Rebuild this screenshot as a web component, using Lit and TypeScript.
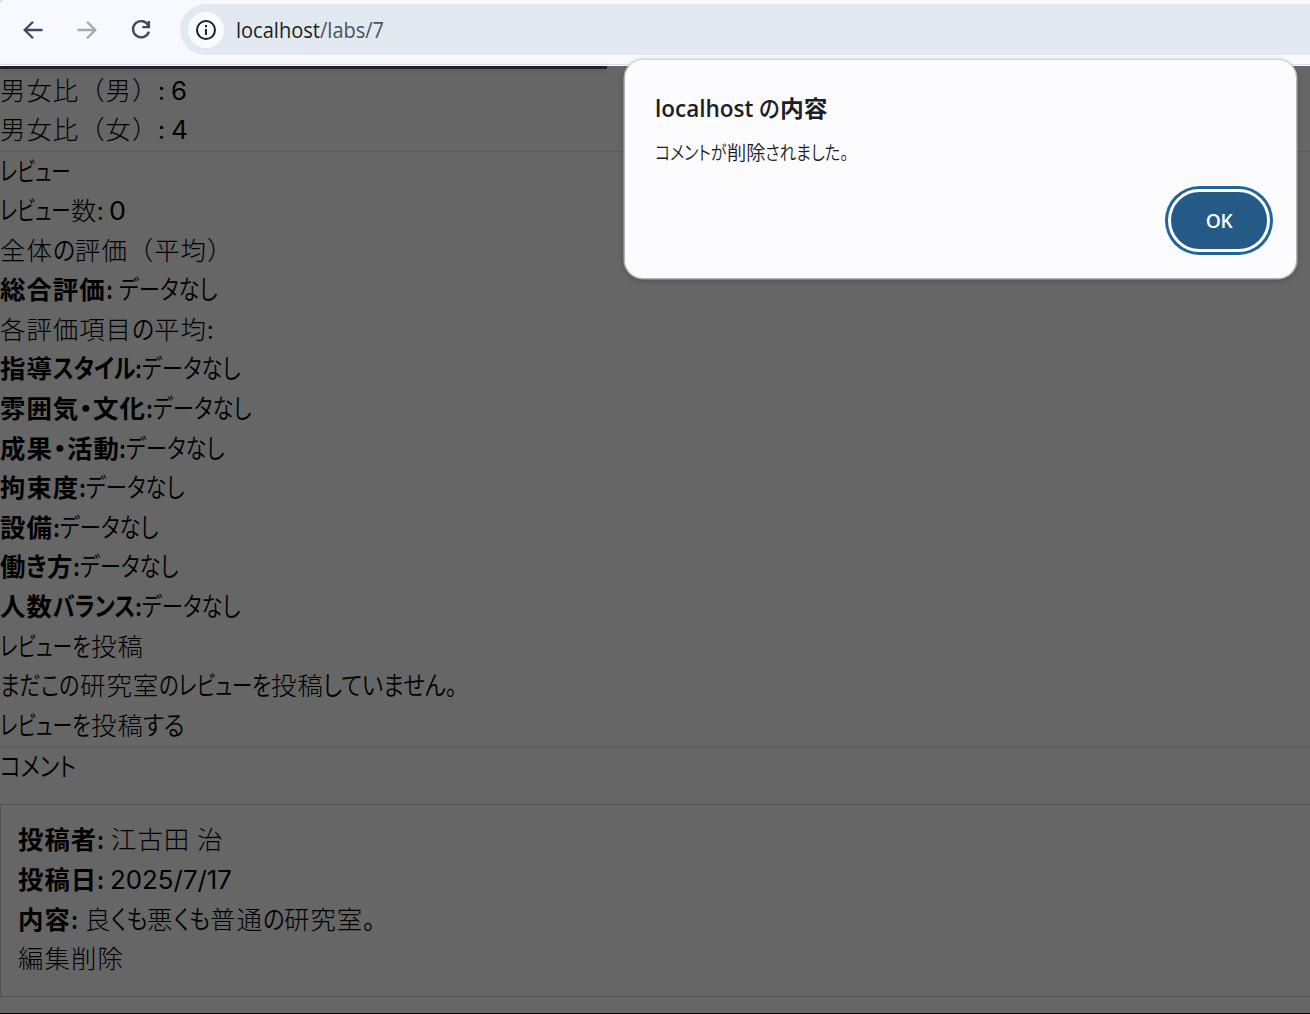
import { LitElement, html, css, svg } from "lit";
import { customElement, property } from "lit/decorators.js";

type Kind = "kanji" | "kana" | "latin" | "ui";
interface Run { t: string; w: number; b?: boolean; k: Kind }

const kanji = (t: string, b = false): Run => ({ t, w: [...t].length * 26.4, b, k: "kanji" });
const kana = (t: string, w: number, b = false): Run => ({ t, w, b, k: "kana" });
const latin = (t: string, w: number, b = false): Run => ({ t, w, b, k: "latin" });
const noData = kana("データなし", 98.5);

/** A run of text condensed or widened to a set advance width. */
@customElement("text-run")
export class TextRun extends LitElement {
  @property() text = "";
  @property({ type: Number }) width = 0;

  static styles = css`
    :host { display: inline-block; white-space: pre; vertical-align: baseline; }
    .ink { display: inline-block; transform-origin: 0 50%; }
  `;

  updated() {
    this.style.width = `${this.width}px`;
    const ink = this.renderRoot.querySelector(".ink") as HTMLElement;
    ink.style.transform = "none";
    ink.style.marginRight = "0";
    const natural = ink.getBoundingClientRect().width;
    if (natural > 0) {
      ink.style.transform = `scaleX(${this.width / natural})`;
      ink.style.marginRight = `${this.width - natural}px`;
    }
  }

  render() {
    return html`<span class="ink">${this.text}</span>`;
  }
}

const counts: Run[][] = [
  [kanji("男女比（男）"), latin(":", 7), latin(" ", 5.8), latin("6", 16)],
  [kanji("男女比（女）"), latin(":", 7), latin(" ", 5.8), latin("4", 17)],
];

const reviews: Run[][] = [
  [kana("レビュー", 70.5)],
  [kana("レビュー", 70.5), kanji("数"), latin(":", 6.6), latin(" ", 6), latin("0", 17)],
  [kanji("全体"), kana("の", 22), kanji("評価（平均）")],
  [kanji("総合評価", true), latin(":", 7, true), latin(" ", 6.4), noData],
  [kanji("各評価項目"), kana("の", 22), kanji("平均"), latin(":", 6.6)],
  [kanji("指導", true), kana("スタイル", 82.5, true), latin(":", 7, true), noData],
  [kanji("雰囲気", true), kana("・", 13.8, true), kanji("文化", true), latin(":", 7, true), noData],
  [kanji("成果", true), kana("・", 13.8, true), kanji("活動", true), latin(":", 7, true), noData],
  [kanji("拘束度", true), latin(":", 7, true), noData],
  [kanji("設備", true), latin(":", 7, true), noData],
  [kanji("働", true), kana("き", 20.6, true), kanji("方", true), latin(":", 7, true), noData],
  [kanji("人数", true), kana("バランス", 82, true), latin(":", 7, true), noData],
  [kana("レビューを", 90.5), kanji("投稿")],
  [kana("まだこの", 79.5), kanji("研究室"), kana("のレビューを", 112), kanji("投稿"), kana("していません。", 134)],
  [kana("レビューを", 90.5), kanji("投稿"), kana("する", 41.5)],
];

const comment: Run[][] = [
  [kanji("投稿者", true), latin(":", 7, true), latin(" ", 6.8), kanji("江古田"), latin(" ", 6.8), kanji("治")],
  [kanji("投稿日", true), latin(":", 7, true), latin(" ", 6), latin("2025/7/17", 122)],
  [kanji("内容", true), latin(":", 7, true), latin(" ", 6.8), kanji("良"), kana("くも", 36.5), kanji("悪"),
   kana("くも", 36), kanji("普通"), kana("の", 21.5), kanji("研究室"), kana("。", 12)],
  [kanji("編集"), kanji("削除")],
];

const backIcon = svg`<path d="M22.5 13H5.5M13 4.7L4.7 13l8.3 8.3"/>`;
const forwardIcon = svg`<path d="M3.5 13h17M13 4.7l8.3 8.3-8.3 8.3"/>`;

@customElement("app-root")
export class AppRoot extends LitElement {
  static styles = css`
    * { box-sizing: border-box; }
    :host {
      display: block; width: 100%; height: 1014px; overflow: hidden; position: relative;
      background: #666; color: #000;
      font-family: "Noto Sans CJK JP", sans-serif;
    }
    .toolbar {
      height: 66px; display: flex; align-items: flex-start; padding: 4px 0 0 20px;
      background: radial-gradient(circle at 0 0, #cfe0f8 0 2px, transparent 3px), #f8f9fe;
      border-bottom: 1px solid #fff;
      box-shadow: inset 0 -1px #dbdfe7;
    }
    .nav { width: 26px; height: 26px; margin: 13px 28px 0 0; fill: none; stroke: #3c4b5d; stroke-width: 2.3; }
    .nav.off { stroke: #a6a9ad; }
    .address {
      flex: 1; height: 51px; margin-left: -2px; padding-left: 8px; display: flex; align-items: center;
      background: #e2e9f1; border-radius: 26px 0 0 26px;
      font: 22px "Open Sans", sans-serif; color: #4a5360;
    }
    .address text-run { padding-bottom: 2px; }
    .info { width: 36px; height: 36px; margin-right: 11.5px; border-radius: 50%; background: #fafbff; flex: none; }
    .address .host { color: #1b1e25; }
    .page { font-size: 26.4px; line-height: 39.6px; }
    .counts { height: 85px; padding-top: 6px; }
    .section { border-top: 1px solid #5b5b5b; }
    .rows { margin-top: -2.5px; }
    .reviews { height: 595px; }
    .row { height: 39.6px; white-space: nowrap; display: flex; align-items: baseline; }
    .kana { font-feature-settings: "palt"; }
    .row .latin { font-family: Inter, sans-serif; font-size: 25.2px; }
    .row .kanji { font-size: 25.4px; letter-spacing: 1px; }
    .kanji { font-weight: 300; }
    .kana { font-weight: 350; }
    .bold { font-weight: 700; }
    .progress {
      position: absolute; left: 0; top: 66px; width: 607px; height: 3px; background: #1c202c;
      box-shadow: 0 2px 6px rgba(0,0,0,.15);
    }
    .card { margin-top: 20px; height: 193px; padding: 16.6px 17px; border: 1px solid #525252; border-right: 0; }
    .footer { position: absolute; left: 0; right: 0; bottom: 0; height: 1px; background: #000; }
    .dialog {
      position: absolute; left: 625px; top: 60px; width: 671px; height: 218px;
      padding: 31px 26px 0 30px; border-radius: 18px; background: #fcfcff;
      box-shadow: 0 0 0 1.5px rgba(205,208,216,.75), 0 2px 7px rgba(0,0,0,.26);
      color: #1b1e25; display: flex; flex-direction: column;
    }
    .title { height: 32px; line-height: 32px; font-size: 23.2px; display: flex; align-items: baseline; }
    .title .ui { font-family: "Open Sans", sans-serif; font-weight: 600; }
    .title .kana { font-weight: 500; }
    .message { height: 28px; line-height: 28px; margin-top: 15px; font-size: 19.4px; display: flex; }
    .message .kanji { font-weight: 350; }
    .ok {
      align-self: flex-end; margin-top: 23px; width: 102px; height: 63px;
      border: 3px solid #fff; border-radius: 32px; background: #245a85; box-shadow: 0 0 0 3px #22639a;
      color: #fff; font: 600 19.2px "Open Sans", sans-serif; letter-spacing: -.3px; padding: 0;
    }
  `;

  private run(r: Run) {
    return html`<text-run class="${r.k} ${r.b ? "bold" : ""}" .text=${r.t} .width=${r.w}></text-run>`;
  }

  private rows(list: Run[][]) {
    return html`<div class="rows">
      ${list.map((runs) => html`<div class="row">${runs.map((r) => this.run(r))}</div>`)}
    </div>`;
  }

  render() {
    return html`
      <div class="toolbar">
        <svg class="nav" viewBox="0 0 26 26">${backIcon}</svg>
        <svg class="nav off" viewBox="0 0 26 26">${forwardIcon}</svg>
        <svg class="nav" viewBox="0 0 26 26"><path d="M20.4 8.6A8.1 8.1 0 1 0 20.9 14.6M20.9 4v6.1h-6.6" stroke-width="2.4"/></svg>
        <div class="address">
          <svg class="info" viewBox="0 0 36 36" fill="none" stroke="#1b1e25">
            <circle cx="18" cy="18" r="9" stroke-width="2"/>
            <path d="M18 17v6M18 13v2.2" stroke-width="2"/>
          </svg>
          <text-run class="host" .text=${"localhost"} .width=${84}></text-run>
          <text-run .text=${"/labs/7"} .width=${64}></text-run>
        </div>
      </div>
      <div class="page">
        <div class="counts">${this.rows(counts)}</div>
        <div class="section reviews">${this.rows(reviews)}</div>
        <div class="section">
          ${this.rows([[kana("コメント", 76)]])}
          <div class="card">${this.rows(comment)}</div>
        </div>
      </div>
      <div class="progress"></div>
      <div class="footer"></div>
      <div class="dialog" role="alertdialog">
        <div class="title">
          <text-run class="ui" .text=${"localhost"} .width=${98.5}></text-run>
          <text-run class="ui" .text=${" "} .width=${5.5}></text-run>
          <text-run class="kana" .text=${"の"} .width=${20.5}></text-run>
          <text-run class="kanji bold" .text=${"内容"} .width=${47.5}></text-run>
        </div>
        <div class="message">
          <text-run class="kana" .text=${"コメントが"} .width=${71.5}></text-run>
          <text-run class="kanji" .text=${"削除"} .width=${38.5}></text-run>
          <text-run class="kana" .text=${"されました。"} .width=${83.5}></text-run>
        </div>
        <button class="ok">OK</button>
      </div>
    `;
  }
}
